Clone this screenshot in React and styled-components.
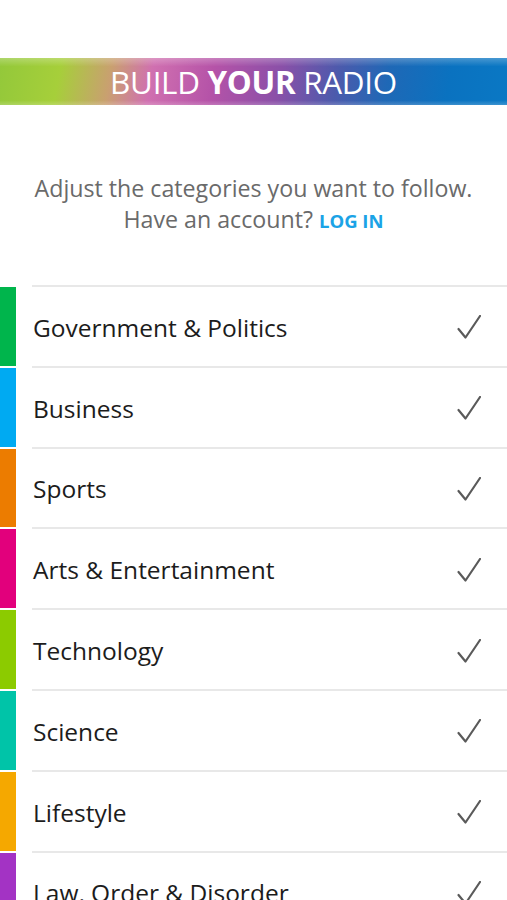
import React from "react";
import styled, { createGlobalStyle } from "styled-components";

const GlobalStyle = createGlobalStyle`
  html, body { margin: 0; padding: 0; background: #ffffff; }
  body { font-family: "Open Sans", "Noto Sans", sans-serif; }
`;

const Page = styled.div`
  width: 507px;
  min-height: 900px;
  padding-top: 58px;
  box-sizing: border-box;
  overflow: hidden;
  background: #fff;
`;

const Banner = styled.div`
  height: 47px;
  display: flex;
  align-items: center;
  justify-content: center;
  background:
    linear-gradient(180deg, rgba(255,255,255,0.25) 0%, rgba(255,255,255,0) 18%, rgba(255,255,255,0) 90%, rgba(255,255,255,0.2) 100%),
    linear-gradient(100deg, #93c83a 0%, #a6cf3a 12%, #c9a070 22%, #d070b0 30%, #b553a8 42%, #8a50a8 55%, #4d5aac 66%, #1f68b6 76%, #0a72c0 88%, #0a78c4 100%);
`;

const BannerTitle = styled.h1`
  margin: 0;
  font-family: "Open Sans", sans-serif;
  font-weight: 400;
  font-size: 31.4px;
  letter-spacing: -0.3px;
  color: #ffffff;
  line-height: 1;
  strong { font-weight: 700; }
`;

const Intro = styled.p`
  margin: 68px 0 0;
  text-align: center;
  font-family: "Open Sans", sans-serif;
  font-size: 23.2px;
  line-height: 31px;
  color: #6a6a6a;
`;

const LoginLink = styled.a`
  color: #1ba3e6;
  font-weight: 700;
  font-size: 18.5px;
  text-decoration: none;
`;

const List = styled.ul`
  list-style: none;
  margin: 49px 0 0;
  padding: 0;
`;

const Row = styled.li`
  display: flex;
  height: 80.8px;
`;

const ColorBar = styled.div`
  width: 16px;
  margin-top: 2px;
  background: ${(p) => p.$color};
  flex: none;
`;

const RowBody = styled.div`
  flex: 1;
  margin-left: 16px;
  border-top: 2px solid #e8e8e8;
  display: flex;
  align-items: center;
  justify-content: space-between;
  padding: 2px 26px 0 0;
`;

const Label = styled.span`
  font-family: "Open Sans", sans-serif;
  font-size: 24.5px;
  color: #1c1c1c;
  padding-left: 1px;
  white-space: nowrap;
`;

const Check = () => (
  <svg width="24" height="24" viewBox="0 0 24 24" fill="none">
    <path d="M1.5 14 L8.5 22.5 L23 1" stroke="#5a5a5a" strokeWidth="2.2" strokeLinecap="round" strokeLinejoin="round" />
  </svg>
);

const categories = [
  { name: "Government & Politics", color: "#00b54c" },
  { name: "Business", color: "#00aaf2" },
  { name: "Sports", color: "#ec7c00" },
  { name: "Arts & Entertainment", color: "#e2007c" },
  { name: "Technology", color: "#8ccb00" },
  { name: "Science", color: "#00c4a8" },
  { name: "Lifestyle", color: "#f5a800" },
  { name: "Law, Order & Disorder", color: "#a333c4" },
];

export default function App() {
  return (
    <Page>
      <GlobalStyle />
      <Banner>
        <BannerTitle>
          BUILD <strong>YOUR</strong> RADIO
        </BannerTitle>
      </Banner>
      <Intro>
        Adjust the categories you want to follow.
        <br />
        Have an account? <LoginLink href="#">LOG IN</LoginLink>
      </Intro>
      <List>
        {categories.map((c) => (
          <Row key={c.name}>
            <ColorBar $color={c.color} />
            <RowBody>
              <Label>{c.name}</Label>
              <Check />
            </RowBody>
          </Row>
        ))}
      </List>
    </Page>
  );
}
